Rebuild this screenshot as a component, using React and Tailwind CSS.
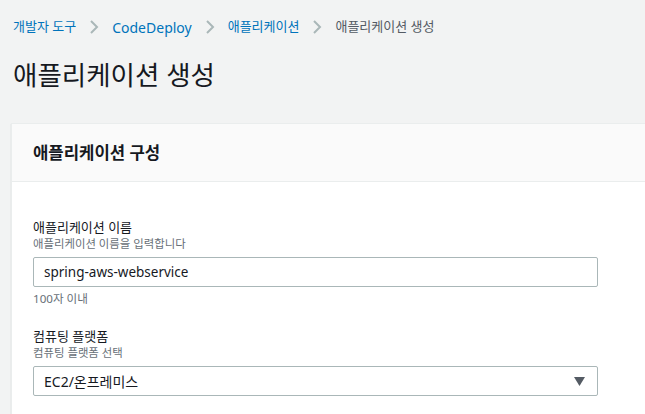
const FONT = { fontFamily: '"Noto Sans", "Noto Sans CJK KR", sans-serif' }

const Chevron = () => (
  <svg width="10" height="16" viewBox="0 0 10 16" className="mx-[13px] shrink-0">
    <path d="M2 2 L8 8 L2 14" fill="none" stroke="#aab7b8" strokeWidth="2" />
  </svg>
)

const Field = ({ label, desc, children, className = '' }) => (
  <div className={className}>
    <div className="text-[13px] leading-[18px] text-[#16191f]">{label}</div>
    <div className="text-[11.4px] leading-[16px] text-[#687078]">{desc}</div>
    {children}
  </div>
)

export default function App() {
  return (
    <div style={FONT} className="h-[414px] w-[645px] overflow-hidden bg-[#f2f3f3] pl-[11px]">
      {/* Breadcrumb */}
      <nav className="flex h-[54px] items-center pl-[2px] text-[14px]">
        <span className="text-[13px] text-[#0073bb]">개발자 도구</span>
        <Chevron />
        <span className="text-[#0073bb]">CodeDeploy</span>
        <Chevron />
        <span className="text-[13px] text-[#0073bb]">애플리케이션</span>
        <Chevron />
        <span className="text-[13px] text-[#545b64]">애플리케이션 생성</span>
      </nav>

      <h1 className="flex h-[44px] items-center pl-[2px] text-[26.5px] text-[#16191f]">
        애플리케이션 생성
      </h1>

      {/* Card */}
      <div className="mt-[25px] w-[700px] border-l border-t border-[#eaeded] bg-white shadow-[0_1px_1px_0_rgba(0,28,36,0.2)]">
        <div className="flex h-[58px] items-center border-b border-[#eaeded] bg-[#fafafa] px-[21px]">
          <h2 className="text-[16.7px] font-bold text-[#16191f]">애플리케이션 구성</h2>
        </div>

        <div className="px-[21px] pb-[40px] pt-[36px]">
          <Field label="애플리케이션 이름" desc="애플리케이션 이름을 입력합니다">
            <div className="mt-[5px] flex h-[30px] w-[565px] items-center rounded-[2px] border border-[#aab7b8] px-[10px] text-[13.5px] text-[#16191f]">
              spring-aws-webservice
            </div>
            <div className="mt-[4px] text-[11.6px] leading-[16px] text-[#687078]">100자 이내</div>
          </Field>

          <Field className="mt-[20px]" label="컴퓨팅 플랫폼" desc="컴퓨팅 플랫폼 선택">
            <div className="mt-[5px] flex h-[30px] w-[565px] items-center justify-between rounded-[2px] border border-[#aab7b8] pl-[10px] pr-[12px] text-[14px] text-[#16191f]">
              <span>EC2/온프레미스</span>
              <svg width="11" height="9" viewBox="0 0 11 9">
                <path d="M0 0 H11 L5.5 9 Z" fill="#545b64" />
              </svg>
            </div>
          </Field>
        </div>
      </div>
    </div>
  )
}
